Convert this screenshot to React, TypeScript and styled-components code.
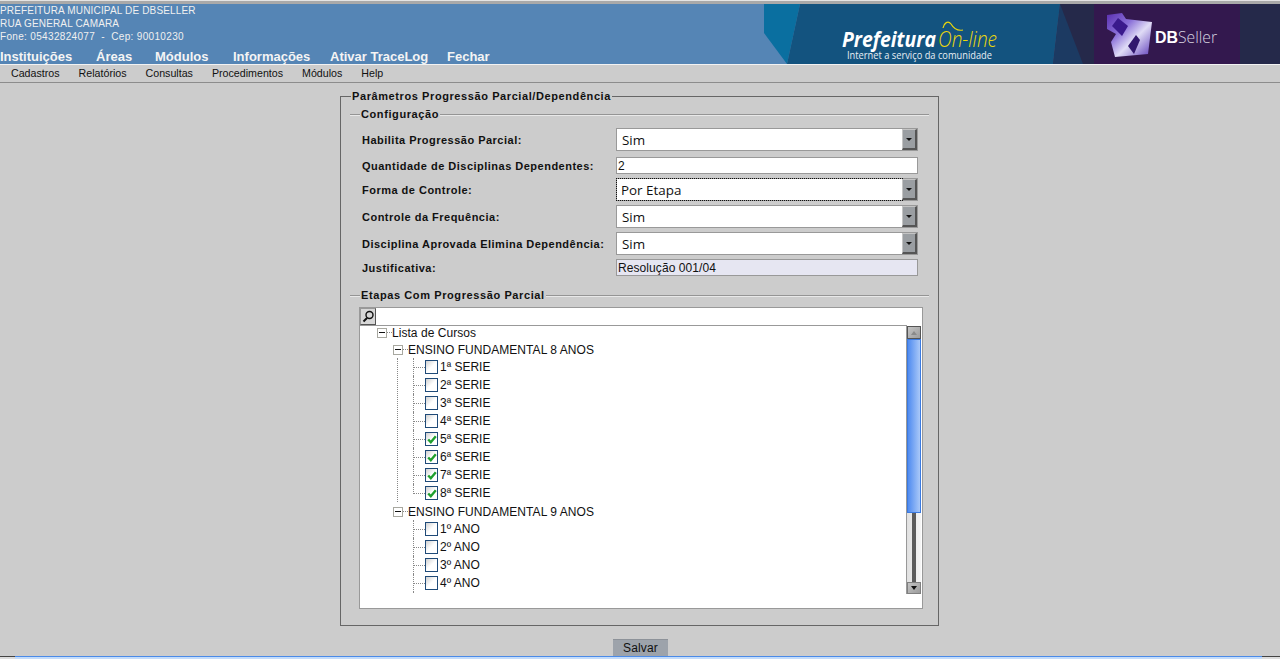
import React from 'react';
import styled, { createGlobalStyle } from 'styled-components';

const GlobalStyle = createGlobalStyle`
  html, body {
    margin: 0;
    padding: 0;
    background: #cccccc;
    overflow: hidden;
  }
  body {
    font-family: "Liberation Sans", Arial, sans-serif;
  }
`;

const Page = styled.div`
  display: flex;
  flex-direction: column;
  width: 1280px;
  height: 659px;
  background: #cccccc;
  overflow: hidden;
`;

const TopStrip = styled.div`
  height: 3px;
  background: #a9a9a9;
  border-top: 1px solid #e4e4e4;
`;

const Header = styled.header`
  display: flex;
  justify-content: space-between;
  height: 60px;
  background: #5585b5;
`;

const HeaderInfo = styled.div`
  display: flex;
  flex-direction: column;
`;

const InfoLine = styled.div<{ $wide?: boolean }>`
  height: 13px;
  line-height: 13px;
  font-size: 10px;
  letter-spacing: ${p => (p.$wide ? 0.33 : 0.16)}px;
  color: #f0f0f0;
  white-space: pre;
`;

const MainNav = styled.nav`
  display: flex;
  margin-top: 6px;
  height: 15px;
`;

const MainNavItem = styled.span<{ $width: number }>`
  width: ${p => p.$width}px;
  font-size: 13px;
  line-height: 16px;
  font-weight: bold;
  color: #f4f4f4;
  white-space: nowrap;
`;

const Banner = styled.svg`
  display: block;
  width: 516px;
  height: 60px;
  flex: none;
`;

const MenuBar = styled.div`
  display: flex;
  gap: 19px;
  height: 17px;
  padding-left: 11px;
  background: #cccccc;
  border-top: 1px solid #f2f2f2;
  border-bottom: 1px solid #8c8c8c;
`;

const MenuItem = styled.span`
  font-size: 10.67px;
  line-height: 17px;
  color: #111111;
`;

const Main = styled.main`
  flex: 1;
  padding-top: 7px;
`;

const OuterFieldset = styled.fieldset`
  box-sizing: border-box;
  width: 599px;
  height: 536px;
  margin: 0 0 0 340px;
  padding: 5px 9px 0;
  border: 1px solid #666666;
`;

const OuterLegend = styled.legend`
  padding: 0 1px;
  margin-left: 1px;
  font-size: 11px;
  line-height: 13px;
  font-weight: bold;
  letter-spacing: 0.59px;
  color: #111111;
`;

const GroupFieldset = styled.fieldset<{ $height: number }>`
  box-sizing: border-box;
  height: ${p => p.$height}px;
  margin: 0;
  padding: 0 0 0 1px;
  border: none;
  border-top: 2px groove #e8e8e8;
`;

const GroupLegend = styled.legend`
  padding: 0 1px;
  margin-left: 9px;
  font-size: 11px;
  line-height: 13px;
  font-weight: bold;
  letter-spacing: 0.6px;
  color: #111111;
`;

const FormRows = styled.div`
  display: flex;
  flex-direction: column;
  gap: 4px;
  padding-top: 7px;
`;

const FormRow = styled.div<{ $spaced?: boolean }>`
  display: flex;
  align-items: center;
  margin-top: ${p => (p.$spaced ? 2 : 0)}px;
`;

const FieldLabel = styled.label`
  width: 265px;
  padding-left: 11px;
  box-sizing: border-box;
  font-size: 11px;
  font-weight: bold;
  letter-spacing: 0.49px;
  color: #111111;
  white-space: nowrap;
`;

const SelectBox = styled.div`
  box-sizing: border-box;
  display: flex;
  justify-content: space-between;
  width: 302px;
  height: 23px;
  background: #ffffff;
  border: 1px solid #999999;
`;

const SelectValue = styled.span<{ $focused?: boolean }>`
  flex: 1;
  padding-left: ${p => (p.$focused ? 4 : 5)}px;
  font-family: "Open Sans", "DejaVu Sans", sans-serif;
  font-size: 13.4px;
  line-height: 22px;
  color: #111111;
  outline: ${p => (p.$focused ? '1px dotted #111111' : 'none')};
`;

const SelectArrow = styled.span`
  box-sizing: border-box;
  display: flex;
  align-items: center;
  justify-content: center;
  width: 15px;
  background: #9a9ea2;
  border-top: 1px solid #c4c4c4;
  border-left: 1px solid #c4c4c4;
  border-right: 2px solid #555555;
  border-bottom: 2px solid #555555;
  &::before {
    content: '';
    border-left: 3px solid transparent;
    border-right: 3px solid transparent;
    border-top: 3px solid #111111;
  }
`;

const TextInput = styled.div<{ $readOnly?: boolean }>`
  box-sizing: border-box;
  width: 302px;
  height: 17px;
  padding-left: 1px;
  background: ${p => (p.$readOnly ? '#e6e6f2' : '#ffffff')};
  border: 1px solid #999999;
  font-size: 12px;
  line-height: 17px;
  letter-spacing: 0.08px;
  color: #111111;
`;

const TreePanel = styled.div`
  box-sizing: border-box;
  display: flex;
  flex-direction: column;
  width: 564px;
  height: 302px;
  margin: 5px 0 0 8px;
  background: #ffffff;
  border: 1px solid #999999;
`;

const SearchRow = styled.div`
  display: flex;
  width: 547px;
  height: 17px;
  border-bottom: 1px solid #999999;
`;

const SearchButton = styled.span`
  box-sizing: border-box;
  display: flex;
  align-items: center;
  justify-content: center;
  width: 16px;
  height: 17px;
  background: #d8d8d8;
  border: 1px solid #555555;
  border-top-color: #999999;
  border-left-color: #999999;
`;

const TreeBody = styled.div`
  display: flex;
  height: 268px;
`;

const TreeContent = styled.div`
  flex: 1;
  padding-left: 17px;
  margin-top: -2px;
  height: 270px;
  overflow: hidden;
`;

const TreeRow = styled.div<{ $top?: number }>`
  display: flex;
  align-items: center;
  height: 17px;
  margin-top: ${p => p.$top ?? 0}px;
  font-size: 12px;
  color: #111111;
  white-space: nowrap;
`;

const Toggle = styled.span`
  box-sizing: border-box;
  display: flex;
  align-items: center;
  justify-content: center;
  width: 10px;
  height: 10px;
  flex: none;
  background: #ffffff;
  border: 1px solid #a8a8a0;
  &::before {
    content: '';
    width: 6px;
    height: 1px;
    background: #111111;
  }
`;

const DotLine = styled.span`
  width: 5px;
  height: 1px;
  flex: none;
  background: repeating-linear-gradient(90deg, #888888 0 1px, transparent 1px 2px);
`;

const RowLabel = styled.span`
  letter-spacing: 0.05px;
`;

const GroupBlock = styled.div`
  margin-left: 16px;
`;

const SerieList = styled.div<{ $stem?: boolean }>`
  margin-left: ${p => (p.$stem ? 4 : 20)}px;
  padding-left: ${p => (p.$stem ? 15 : 0)}px;
  border-left: ${p => (p.$stem ? '1px dotted #888888' : 'none')};
`;

const SerieRow = styled.div`
  display: flex;
  height: 18px;
  font-size: 12px;
  color: #111111;
  white-space: nowrap;
`;

const Connector = styled.span<{ $last?: boolean }>`
  box-sizing: border-box;
  width: 12px;
  flex: none;
  height: ${p => (p.$last ? '10px' : '18px')};
  border-left: 1px dotted #888888;
  background: repeating-linear-gradient(90deg, #888888 0 1px, transparent 1px 2px) 0 9px / 100% 1px no-repeat;
`;

const StemTail = styled.div`
  box-sizing: border-box;
  width: 1px;
  height: 3px;
  border-left: 1px dotted #888888;
`;

const CheckBox = styled.span`
  box-sizing: border-box;
  display: flex;
  align-items: center;
  justify-content: center;
  width: 13px;
  height: 14px;
  margin-top: 2px;
  flex: none;
  background: linear-gradient(135deg, #d0d0d0, #ffffff 50%);
  border: 1px solid #1f4a78;
`;

const SerieLabel = styled.span`
  margin-left: 2px;
  line-height: 18px;
`;

const VScroll = styled.div`
  display: flex;
  flex-direction: column;
  width: 14px;
  flex: none;
  margin-right: 1px;
  background: #f0f0f0;
  border-left: 1px solid #999999;
`;

const ScrollButton = styled.span<{ $down?: boolean }>`
  box-sizing: border-box;
  display: flex;
  align-items: center;
  justify-content: center;
  height: ${p => (p.$down ? 12 : 13)}px;
  background: linear-gradient(135deg, #c4c4c4, #9c9c9c);
  border: 1px solid ${p => (p.$down ? '#808080' : '#555555')};
`;

const ScrollThumb = styled.div`
  height: 174px;
  background: linear-gradient(90deg, #4f8bf0, #a9c8f8);
  border: 1px solid #3b7ae0;
  box-sizing: border-box;
`;

const ScrollTrack = styled.div`
  flex: 1;
  display: flex;
  justify-content: center;
  background: linear-gradient(90deg, #e0e0e0, #f6f6f6);
  &::before {
    content: '';
    width: 4px;
    background: #5c5c5c;
  }
`;

const ArrowGlyph = styled.span<{ $up?: boolean; $color: string }>`
  border-left: 3px solid transparent;
  border-right: 3px solid transparent;
  ${p => (p.$up ? `border-bottom: 4px solid ${p.$color};` : `border-top: 4px solid ${p.$color};`)}
`;

const Footer = styled.footer`
  display: flex;
  justify-content: center;
  height: 17px;
  padding-left: 1px;
`;

const SaveButton = styled.button`
  box-sizing: border-box;
  width: 55px;
  height: 17px;
  padding: 0;
  background: #9da3ab;
  border: none;
  border-top: 1px solid #8d9299;
  font-family: "Liberation Sans", Arial, sans-serif;
  font-size: 12px;
  letter-spacing: 0.15px;
  color: #111111;
`;

const HScroll = styled.div`
  display: flex;
  height: 3px;
  flex: none;
`;

const HScrollEnd = styled.span<{ $width: number }>`
  width: ${p => p.$width}px;
  box-sizing: border-box;
  border-top: 1px solid #444444;
  background: #dddddd;
`;

const HScrollThumb = styled.div`
  flex: 1;
  border-top: 1px solid #4a8ae8;
  background: #c4dcfa;
`;

const mainNav = [
  { label: 'Instituições', width: 96 },
  { label: 'Áreas', width: 59 },
  { label: 'Módulos', width: 78 },
  { label: 'Informações', width: 97 },
  { label: 'Ativar TraceLog', width: 117 },
  { label: 'Fechar', width: 50 },
];

const menu = ['Cadastros', 'Relatórios', 'Consultas', 'Procedimentos', 'Módulos', 'Help'];

const SelectField = ({ value, focused }: { value: string; focused?: boolean }) => (
  <SelectBox>
    <SelectValue $focused={focused}>{value}</SelectValue>
    <SelectArrow />
  </SelectBox>
);

const Check = () => (
  <svg width="10" height="9" viewBox="0 0 10 9">
    <path d="M1.2 4.5 L3.8 7.2 L8.8 1.2" fill="none" stroke="#1f9f2e" strokeWidth="2.4" />
  </svg>
);

const Serie = ({ label, checked, last }: { label: string; checked?: boolean; last?: boolean }) => (
  <SerieRow>
    <Connector $last={last} />
    <CheckBox>{checked && <Check />}</CheckBox>
    <SerieLabel>{label}</SerieLabel>
  </SerieRow>
);

const LogoBanner = () => (
  <Banner viewBox="0 0 516 60">
    <defs>
      <linearGradient id="dbLogo" x1="0" y1="0" x2="1" y2="1">
        <stop offset="0" stopColor="#5a2fb0" />
        <stop offset="0.35" stopColor="#8a70d8" />
        <stop offset="0.6" stopColor="#e0dcf6" />
        <stop offset="1" stopColor="#5a38b8" />
      </linearGradient>
    </defs>
    <polygon points="0,0 36,0 23,60 0,29" fill="#0a6fa0" />
    <polygon points="36,0 296,0 289,60 23,60" fill="#13537f" />
    <polygon points="296,0 516,0 516,60 289,60" fill="#25294a" />
    <polygon points="296,0 319,60 289,60" fill="#1c3a62" />
    <rect x="330" width="146" height="60" fill="#33184e" />
    <text x="78" y="43" fontFamily="'Open Sans', sans-serif" fontSize="21" fontWeight="700" fontStyle="italic" fill="#ffffff" textLength="94" lengthAdjust="spacingAndGlyphs">Prefeitura</text>
    <text x="174" y="43" fontFamily="'Open Sans', sans-serif" fontSize="22" fontWeight="300" fontStyle="italic" fill="#ecd80c" textLength="59" lengthAdjust="spacingAndGlyphs">On-line</text>
    <path d="M179 24 C180 19 184 16 187 20 C190 25 194 27 199 26" fill="none" stroke="#ecd80c" strokeWidth="1.2" />
    <text x="83" y="55" fontFamily="'Open Sans', sans-serif" fontSize="10" fill="#e8eef4" textLength="145" lengthAdjust="spacingAndGlyphs">Internet a serviço da comunidade</text>
    <polygon points="343,11 358,9 362,15 388,18 384,50 351,53 347,38 352,30 343,25" fill="url(#dbLogo)" />
    <polygon points="354,14 364,22 358,32 348,22" fill="#3a1a8c" />
    <polygon points="364,42 372,31 376,36 370,50" fill="#32186e" />
    <text x="391" y="39" fontFamily="'Liberation Sans', sans-serif" fontSize="16" fontWeight="700" fill="#ffffff" textLength="23" lengthAdjust="spacingAndGlyphs">DB</text>
    <text x="414" y="39" fontFamily="'Open Sans', sans-serif" fontSize="16" fontWeight="300" fill="#d8d4e0" textLength="39" lengthAdjust="spacingAndGlyphs">Seller</text>
  </Banner>
);

const App: React.FC = () => {
  return (
    <Page>
      <GlobalStyle />
      <TopStrip />
      <Header>
        <HeaderInfo>
          <InfoLine>PREFEITURA MUNICIPAL DE DBSELLER</InfoLine>
          <InfoLine>RUA GENERAL CAMARA</InfoLine>
          <InfoLine $wide>Fone: 05432824077  -  Cep: 90010230</InfoLine>
          <MainNav>
            {mainNav.map(item => (
              <MainNavItem key={item.label} $width={item.width}>{item.label}</MainNavItem>
            ))}
          </MainNav>
        </HeaderInfo>
        <LogoBanner />
      </Header>
      <MenuBar>
        {menu.map(item => (
          <MenuItem key={item}>{item}</MenuItem>
        ))}
      </MenuBar>
      <Main>
        <OuterFieldset>
          <OuterLegend>Parâmetros Progressão Parcial/Dependência</OuterLegend>
          <GroupFieldset $height={181}>
            <GroupLegend>Configuração</GroupLegend>
            <FormRows>
              <FormRow>
                <FieldLabel>Habilita Progressão Parcial:</FieldLabel>
                <SelectField value="Sim" />
              </FormRow>
              <FormRow $spaced>
                <FieldLabel>Quantidade de Disciplinas Dependentes:</FieldLabel>
                <TextInput>2</TextInput>
              </FormRow>
              <FormRow>
                <FieldLabel>Forma de Controle:</FieldLabel>
                <SelectField value="Por Etapa" focused />
              </FormRow>
              <FormRow>
                <FieldLabel>Controle da Frequência:</FieldLabel>
                <SelectField value="Sim" />
              </FormRow>
              <FormRow>
                <FieldLabel>Disciplina Aprovada Elimina Dependência:</FieldLabel>
                <SelectField value="Sim" />
              </FormRow>
              <FormRow>
                <FieldLabel>Justificativa:</FieldLabel>
                <TextInput $readOnly>Resolução 001/04</TextInput>
              </FormRow>
            </FormRows>
          </GroupFieldset>
          <GroupFieldset $height={320}>
            <GroupLegend>Etapas Com Progressão Parcial</GroupLegend>
            <TreePanel>
              <SearchRow>
                <SearchButton>
                  <svg width="13" height="13" viewBox="0 0 13 13">
                    <circle cx="7.5" cy="5" r="3.5" fill="none" stroke="#111111" strokeWidth="1.4" />
                    <path d="M5 8 L1.5 11.5" stroke="#111111" strokeWidth="2" />
                  </svg>
                </SearchButton>
              </SearchRow>
              <TreeBody>
                <TreeContent>
                  <TreeRow>
                    <Toggle />
                    <DotLine />
                    <RowLabel>Lista de Cursos</RowLabel>
                  </TreeRow>
                  <GroupBlock>
                    <TreeRow>
                      <Toggle />
                      <DotLine />
                      <RowLabel>ENSINO FUNDAMENTAL 8 ANOS</RowLabel>
                    </TreeRow>
                    <SerieList $stem>
                      <Serie label="1ª SERIE" />
                      <Serie label="2ª SERIE" />
                      <Serie label="3ª SERIE" />
                      <Serie label="4ª SERIE" />
                      <Serie label="5ª SERIE" checked />
                      <Serie label="6ª SERIE" checked />
                      <Serie label="7ª SERIE" checked />
                      <Serie label="8ª SERIE" checked last />
                    </SerieList>
                    <TreeRow $top={1}>
                      <Toggle />
                      <DotLine />
                      <RowLabel>ENSINO FUNDAMENTAL 9 ANOS</RowLabel>
                    </TreeRow>
                    <SerieList>
                      <Serie label="1º ANO" />
                      <Serie label="2º ANO" />
                      <Serie label="3º ANO" />
                      <Serie label="4º ANO" />
                      <StemTail />
                    </SerieList>
                  </GroupBlock>
                </TreeContent>
                <VScroll>
                  <ScrollButton><ArrowGlyph $up $color="#8a8a8a" /></ScrollButton>
                  <ScrollThumb />
                  <ScrollTrack />
                  <ScrollButton $down><ArrowGlyph $color="#111111" /></ScrollButton>
                </VScroll>
              </TreeBody>
            </TreePanel>
          </GroupFieldset>
        </OuterFieldset>
      </Main>
      <Footer>
        <SaveButton>Salvar</SaveButton>
      </Footer>
      <HScroll>
        <HScrollEnd $width={15} />
        <HScrollThumb />
        <HScrollEnd $width={18} />
      </HScroll>
    </Page>
  );
};

export default App;
